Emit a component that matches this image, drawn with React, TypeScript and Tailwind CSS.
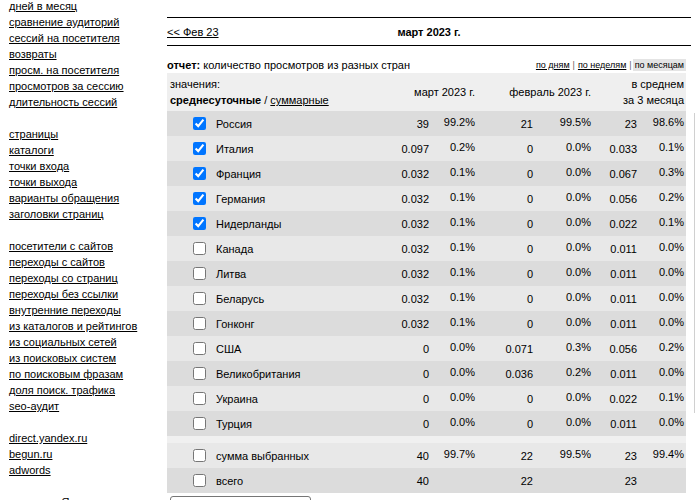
import React from "react";

const group1 = [
  "дней в месяц",
  "сравнение аудиторий",
  "сессий на посетителя",
  "возвраты",
  "просм. на посетителя",
  "просмотров за сессию",
  "длительность сессий",
];
const group2 = [
  "страницы",
  "каталоги",
  "точки входа",
  "точки выхода",
  "варианты обращения",
  "заголовки страниц",
];
const group3 = [
  "посетители с сайтов",
  "переходы с сайтов",
  "переходы со страниц",
  "переходы без ссылки",
  "внутренние переходы",
  "из каталогов и рейтингов",
  "из социальных сетей",
  "из поисковых систем",
  "по поисковым фразам",
  "доля поиск. трафика",
  "seo-аудит",
];
const group4 = ["direct.yandex.ru", "begun.ru", "adwords"];

type Row = {
  name: string;
  checked: boolean;
  v: [string, string, string, string, string, string];
};

const rows: Row[] = [
  { name: "Россия", checked: true, v: ["39", "99.2%", "21", "99.5%", "23", "98.6%"] },
  { name: "Италия", checked: true, v: ["0.097", "0.2%", "0", "0.0%", "0.033", "0.1%"] },
  { name: "Франция", checked: true, v: ["0.032", "0.1%", "0", "0.0%", "0.067", "0.3%"] },
  { name: "Германия", checked: true, v: ["0.032", "0.1%", "0", "0.0%", "0.056", "0.2%"] },
  { name: "Нидерланды", checked: true, v: ["0.032", "0.1%", "0", "0.0%", "0.022", "0.1%"] },
  { name: "Канада", checked: false, v: ["0.032", "0.1%", "0", "0.0%", "0.011", "0.0%"] },
  { name: "Литва", checked: false, v: ["0.032", "0.1%", "0", "0.0%", "0.011", "0.0%"] },
  { name: "Беларусь", checked: false, v: ["0.032", "0.1%", "0", "0.0%", "0.011", "0.0%"] },
  { name: "Гонконг", checked: false, v: ["0.032", "0.1%", "0", "0.0%", "0.011", "0.0%"] },
  { name: "США", checked: false, v: ["0", "0.0%", "0.071", "0.3%", "0.056", "0.2%"] },
  { name: "Великобритания", checked: false, v: ["0", "0.0%", "0.036", "0.2%", "0.011", "0.0%"] },
  { name: "Украина", checked: false, v: ["0", "0.0%", "0", "0.0%", "0.022", "0.1%"] },
  { name: "Турция", checked: false, v: ["0", "0.0%", "0", "0.0%", "0.011", "0.0%"] },
];

const totals: Row[] = [
  { name: "сумма выбранных", checked: false, v: ["40", "99.7%", "22", "99.5%", "23", "99.4%"] },
  { name: "всего", checked: false, v: ["40", "", "22", "", "23", ""] },
];

function NavGroup({ items }: { items: string[] }) {
  return (
    <div className="flex flex-col">
      {items.map((t) => (
        <a key={t} href="#" className="underline h-[16px] whitespace-nowrap">
          {t}
        </a>
      ))}
    </div>
  );
}

function DataRow({ row, dark }: { row: Row; dark: boolean }) {
  return (
    <div
      className={`grid grid-cols-[48px_168px_46px_46px_58px_58px_46px_47px] pr-[2px] h-[25px] items-center ${
        dark ? "bg-[#dcdcdc]" : "bg-[#e8e8e8]"
      }`}
    >
      <div className="pl-[26px] flex items-center h-[25px]">
        <input type="checkbox" defaultChecked={row.checked} className="w-[13px] h-[13px]" />
      </div>
      <div className="pl-[1px] whitespace-nowrap">{row.name}</div>
      {row.v.map((x, i) => (
        <div
          key={i}
          className={`text-right whitespace-nowrap ${i % 2 === 1 ? "pb-[4px]" : "pt-[1px]"}`}
        >
          {x}
        </div>
      ))}
    </div>
  );
}

export default function App() {
  return (
    <div className="flex w-[697px] h-[500px] overflow-hidden bg-white text-black font-['Liberation_Sans',Arial,sans-serif] text-[11px] leading-[16px]">
      <aside className="w-[167px] shrink-0 -mt-[2px] pl-[9px] flex flex-col gap-[16px]">
        <NavGroup items={group1} />
        <NavGroup items={group2} />
        <NavGroup items={group3} />
        <NavGroup items={group4} />
        <div className="-ml-[9px] w-[160px] text-center">Яндекс</div>
      </aside>

      <main className="w-[524px] shrink-0 pt-[17px]">
        <div className="border-t border-black" />
        <div className="grid grid-cols-[1fr_auto_1fr] items-center h-[27px]">
          <a href="#" className="underline justify-self-start">
            &lt;&lt; Фев 23
          </a>
          <div className="font-bold">март 2023 г.</div>
          <div />
        </div>
        <div className="border-t border-black" />

        <div className="w-[519px]">
          <div className="mt-[11px] flex justify-between items-center h-[16px]">
            <div className="whitespace-nowrap">
              <span className="font-bold">отчет:</span> количество просмотров из разных стран
            </div>
            <div className="text-[9px] leading-[12px] whitespace-nowrap flex items-center">
              <a href="#" className="underline">по дням</a>
              <span className="px-[3px] text-[#666]">|</span>
              <a href="#" className="underline">по неделям</a>
              <span className="pl-[3px] pr-[1px] text-[#666]">|</span>
              <span className="bg-[#e4e4e4] px-[2px]">по месяцам</span>
            </div>
          </div>

          <div className="grid grid-cols-[48px_168px_46px_46px_58px_58px_46px_47px] pr-[2px] bg-[#efefef] pt-[3px] pb-[3px] items-center">
            <div className="col-span-2 pl-[3px] whitespace-nowrap">
              <div>значения:</div>
              <div>
                <span className="font-bold">среднесуточные</span> /{" "}
                <a href="#" className="underline">суммарные</a>
              </div>
            </div>
            <div className="col-span-2 text-right whitespace-nowrap">март 2023 г.</div>
            <div className="col-span-2 text-right whitespace-nowrap">февраль 2023 г.</div>
            <div className="col-span-2 text-right whitespace-nowrap">
              <div>в среднем</div>
              <div>за 3 месяца</div>
            </div>
          </div>

          {rows.map((r, i) => (
            <DataRow key={r.name} row={r} dark={i % 2 === 0} />
          ))}
          <div className="h-[7px] bg-[#f0f0f0]" />
          {totals.map((r, i) => (
            <DataRow key={r.name} row={r} dark={i % 2 === 1} />
          ))}

          <button className="mt-[3px] ml-[3px] w-[141px] h-[22px] border border-[#767676] rounded-[3px] bg-white text-[11px]">
            показать график
          </button>
        </div>
      </main>

      <div className="ml-[3px] mt-[113px] h-[300px] border-l border-[#d0d0d0]" />
    </div>
  );
}
